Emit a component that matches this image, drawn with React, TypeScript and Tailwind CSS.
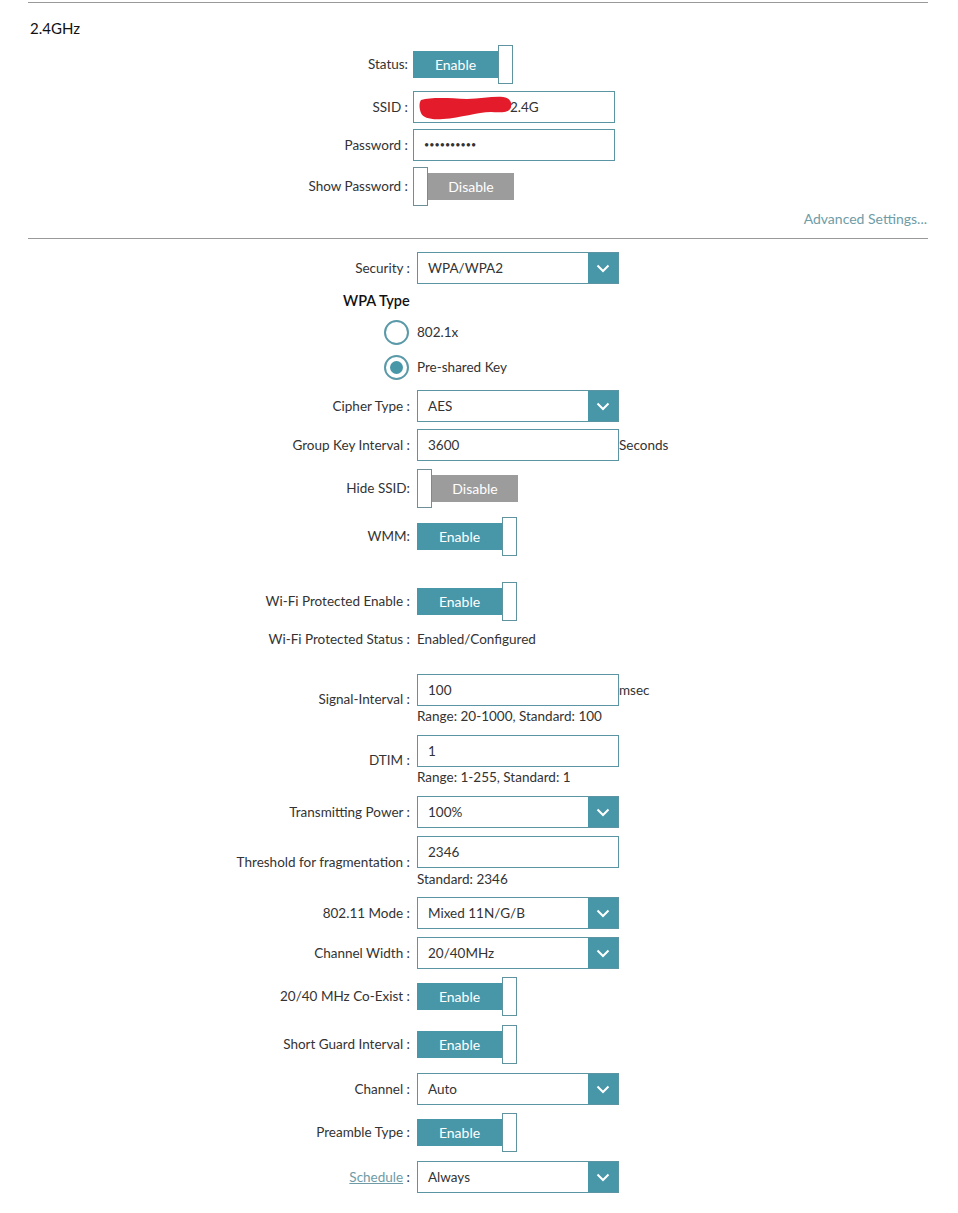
import { ReactNode } from 'react';

// Wireless settings (2.4GHz) panel

const TEAL = 'bg-[#4797a9]';

const Toggle = ({ on }: { on: boolean }) =>
  on ? (
    <div className="flex items-center">
      <div className={`w-[85px] h-[27px] ${TEAL} text-white text-[14px] flex items-center justify-center`}>Enable</div>
      <div className="w-[15px] h-[39px] bg-white border border-[#5f93a0]" />
    </div>
  ) : (
    <div className="flex items-center">
      <div className="w-[15px] h-[39px] bg-white border border-[#6f8f98]" />
      <div className="w-[86px] h-[27px] bg-[#9c9c9c] text-white text-[14px] flex items-center justify-center">Disable</div>
    </div>
  );

const Input = ({ value, children }: { value?: string; children?: ReactNode }) => (
  <div className="w-[202px] h-[32px] border border-[#5b95a3] bg-white flex items-center pl-[10px] text-[13.5px] text-[#333] relative">
    {children ?? value}
  </div>
);

const Select = ({ value }: { value: string }) => (
  <div className="w-[202px] h-[32px] border border-[#5b95a3] bg-white flex items-center text-[13.5px] text-[#333]">
    <span className="flex-1 pl-[10px]">{value}</span>
    <div className={`w-[30px] h-full ${TEAL} flex items-center justify-center`}>
      <svg width="14" height="9" viewBox="0 0 14 9" fill="none">
        <path d="M1.5 1.5 L7 7 L12.5 1.5" stroke="white" strokeWidth="2" />
      </svg>
    </div>
  </div>
);

const Row = ({ label, className, wide, children }: { label: ReactNode; className: string; wide?: boolean; children: ReactNode }) => (
  <div className={`flex items-center ${className}`}>
    <div className={`${wide ? 'w-[417px] pr-[7px]' : 'w-[413px] pr-[5px]'} text-right text-[13.5px] text-[#333] shrink-0`}>{label}</div>
    {children}
  </div>
);

const Radio = ({ checked, label, className }: { checked: boolean; label: string; className: string }) => (
  <div className={`flex items-center h-[26px] ${className}`}>
    <div className="w-[384px]" />
    <div className="w-[25px] h-[25px] rounded-full border-2 border-[#5a9aa8] flex items-center justify-center">
      {checked && <div className="w-[13px] h-[13px] rounded-full bg-[#4797a9]" />}
    </div>
    <span className="ml-[8px] text-[13.5px] text-[#333]">{label}</span>
  </div>
);

const Hint = ({ text, className }: { text: string; className: string }) => (
  <div className={`text-[13.5px] leading-[18px] text-[#333] ${className}`}>{text}</div>
);

export default function App() {
  return (
    <div className="w-[958px] min-h-[1213px] bg-white font-['Lato',sans-serif] flex flex-col">
      <div className="mt-[2px] ml-[28px] mr-[30px] h-px bg-[#999]" />
      <div className="mt-[15px] ml-[30px] text-[15px] leading-[20px] text-[#111]">2.4GHz</div>

      <Row label="Status:" className="mt-[7px] h-[39px]"><Toggle on /></Row>
      <Row label="SSID :" className="mt-[7px] h-[32px]">
        <Input>
          {/* red scribble hiding the network name */}
          <svg className="absolute left-[5px] top-[4px]" width="94" height="24" viewBox="0 0 94 24">
            <path d="M2 4 C12 1 30 2 48 3 C62 3 74 0 84 1 C91 2 93 6 92 11 C91 16 84 17 72 16 C58 16 42 22 24 23 C12 24 4 22 2 17 C0 12 0 7 2 4 Z" fill="#e31b2b" />
          </svg>
          <span className="ml-[86px]">2.4G</span>
        </Input>
      </Row>
      <Row label="Password :" className="mt-[6px] h-[32px]">
        <Input><span className="text-[9px]">••••••••••</span></Input>
      </Row>
      <Row label="Show Password :" className="mt-[6px] h-[39px]"><Toggle on={false} /></Row>
      <div className="mt-[4px] mr-[31px] text-right text-[14px] leading-[18px] text-[#6e9ca7]">Advanced Settings...</div>
      <div className="mt-[10px] ml-[28px] mr-[30px] h-px bg-[#999]" />

      <Row wide label="Security :" className="mt-[13px] h-[32px]"><Select value="WPA/WPA2" /></Row>
      <div className="mt-[7px] ml-[343px] text-[14.5px] leading-[20px] font-semibold text-[#111]">WPA Type</div>
      <Radio checked={false} label="802.1x" className="mt-[8px]" />
      <Radio checked label="Pre-shared Key" className="mt-[9px]" />
      <Row wide label="Cipher Type :" className="mt-[10px] h-[32px]"><Select value="AES" /></Row>
      <Row wide label="Group Key Interval :" className="mt-[7px] h-[32px]">
        <Input value="3600" />
        <span className="text-[13.5px] text-[#333]">Seconds</span>
      </Row>
      <Row wide label="Hide SSID:" className="mt-[8px] h-[39px]"><Toggle on={false} /></Row>
      <Row wide label="WMM:" className="mt-[9px] h-[39px]"><Toggle on /></Row>
      <Row wide label="Wi-Fi Protected Enable :" className="mt-[26px] h-[39px]"><Toggle on /></Row>
      <Row wide label="Wi-Fi Protected Status :" className="mt-[9px] h-[18px]">
        <span className="text-[13.5px] text-[#333]">Enabled/Configured</span>
      </Row>
      <Row wide label="Signal-Interval :" className="mt-[26px]">
        <div className="flex flex-col">
          <div className="flex items-center">
            <Input value="100" />
            <span className="text-[13.5px] text-[#333]">msec</span>
          </div>
          <Hint text="Range: 20-1000, Standard: 100" className="mt-px" />
        </div>
      </Row>
      <Row wide label="DTIM :" className="mt-[10px]">
        <div className="flex flex-col">
          <Input value="1" />
          <Hint text="Range: 1-255, Standard: 1" className="mt-px" />
        </div>
      </Row>
      <Row wide label="Transmitting Power :" className="mt-[10px] h-[32px]"><Select value="100%" /></Row>
      <Row wide label="Threshold for fragmentation :" className="mt-[8px]">
        <div className="flex flex-col">
          <Input value="2346" />
          <Hint text="Standard: 2346" className="mt-[2px]" />
        </div>
      </Row>
      <Row wide label="802.11 Mode :" className="mt-[9px] h-[32px]"><Select value="Mixed 11N/G/B" /></Row>
      <Row wide label="Channel Width :" className="mt-[8px] h-[32px]"><Select value="20/40MHz" /></Row>
      <Row wide label="20/40 MHz Co-Exist :" className="mt-[8px] h-[39px]"><Toggle on /></Row>
      <Row wide label="Short Guard Interval :" className="mt-[9px] h-[39px]"><Toggle on /></Row>
      <Row wide label="Channel :" className="mt-[9px] h-[32px]"><Select value="Auto" /></Row>
      <Row wide label="Preamble Type :" className="mt-[8px] h-[39px]"><Toggle on /></Row>
      <Row
        wide
        label={<><span className="underline text-[#6f9ba6]">Schedule</span> :</>}
        className="mt-[9px] h-[32px]"
      >
        <Select value="Always" />
      </Row>
    </div>
  );
}
